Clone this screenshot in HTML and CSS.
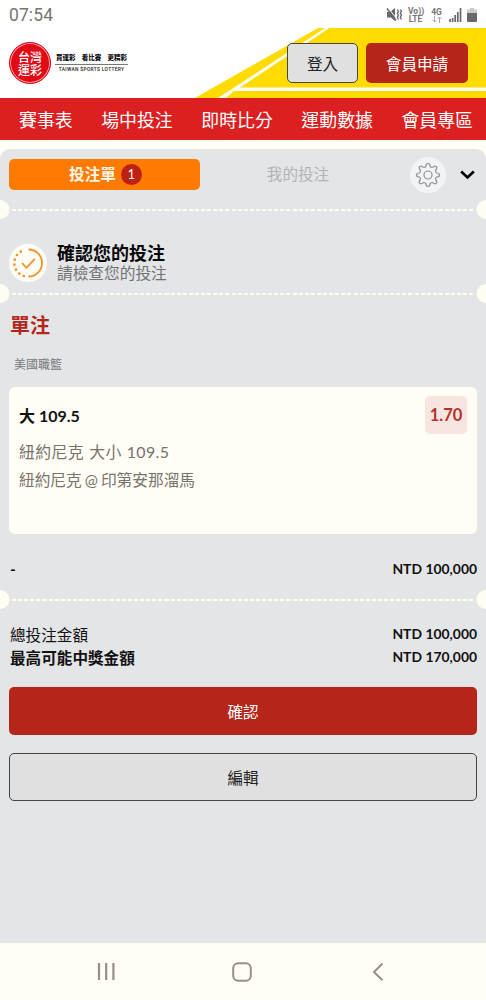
FILE: index.html
```html
<!DOCTYPE html>
<html lang="zh-Hant">
<head>
<meta charset="utf-8">
<meta name="viewport" content="width=device-width, initial-scale=1">
<title>台灣運彩</title>
<link rel="stylesheet" href="styles.css">
</head>
<body>
<div class="screen">
  <div class="status">
    <span class="clock">07:54</span>
    <div class="status-icons">
      <svg width="16" height="16" viewBox="0 0 16 16"><path d="M1 5h3l5-4v13l-4-3.500H1z" fill="#686868"/><path d="M2 .8l9.500 12" stroke="#fff" stroke-width="1"/><path d="M1 1.500l9 12" stroke="#686868" stroke-width="1.600"/><path d="M11.300 2.500l1.200 1.700-1.200 2 1.200 2-1.200 2 1.200 2.300M14.300 2.500l1.200 1.700-1.200 2 1.200 2-1.200 2 1.200 2.300" fill="none" stroke="#686868" stroke-width="1.300"/></svg>
      <span class="net volte">Vo))<br>LTE</span>
      <span class="net lte">4G<br><svg width="10" height="7" viewBox="0 0 10 7"><path d="M2.500 0v6M.5 4l2 2 2-2M7.500 7V1M5.500 3l2-2 2 2" fill="none" stroke="#aaa"/></svg></span>
      <svg class="signal" width="13" height="14" viewBox="0 0 13 14"><path d="M1 14v-3M3.600 14v-4M6.200 14V7M8.800 14V4M11.500 14V0" stroke="#686868" stroke-width="1.700"/></svg>
      <svg class="battery" width="10" height="14" viewBox="0 0 10 14"><path d="M3 0h4v1.500h3V6H0V1.500h3z" fill="#c9c9c9"/><path d="M0 5h10v8q0 1-1 1H1q-1 0-1-1z" fill="#686868"/></svg>
    </div>
  </div>

  <header class="header">
    <svg class="stripes" width="486" height="70" viewBox="0 0 486 70">
      <path d="M195 70L318 0H486V70z" fill="#ffdb00"/>
      <path d="M218 70L325 0h4.500L240 59.500H486V63H234L226 70z" fill="#fffdf2"/>
    </svg>
    <div class="brand">
      <div class="seal"><span>台灣</span><span>運彩</span></div>
      <div class="tagline">
        <div class="slogan"><span>買運彩</span><span>看比賽</span><span>更精彩</span></div>
        <div class="english">TAIWAN SPORTS LOTTERY</div>
      </div>
    </div>
    <div class="account">
      <button class="btn login">登入</button>
      <button class="btn join">會員申請</button>
    </div>
  </header>

  <nav class="menu"><a>賽事表</a><a>場中投注</a><a>即時比分</a><a>運動數據</a><a>會員專區</a></nav>

  <main class="slip">
    <div class="tabs">
      <div class="tab active">投注單<span class="count">1</span></div>
      <div class="tab">我的投注</div>
      <div class="gear"><svg width="26" height="26" viewBox="0 0 26 26" fill="none" stroke="#8f9194" stroke-width="1.200" stroke-linejoin="round"><path d="M11 4.200Q11 1.500 13 1.500T15 4.200Q15.300 5 16.300 5.300T18.200 5.100Q20.100 3.500 21.300 4.700T20.900 7.800Q20.400 8.700 20.700 9.700T21.800 11Q24.500 11 24.500 13T21.800 15Q21 15.300 20.700 16.300T20.900 18.200Q22.500 20.100 21.300 21.300T18.200 20.900Q17.300 20.400 16.300 20.700T15 21.800Q15 24.500 13 24.500T11 21.800Q10.700 21 9.700 20.700T7.800 20.900Q5.900 22.500 4.700 21.300T5.100 18.200Q5.600 17.300 5.300 16.300T4.200 15Q1.500 15 1.500 13T4.200 11Q5 10.700 5.300 9.700T5.100 7.800Q3.500 5.900 4.700 4.700T7.800 5.100Q8.700 5.600 9.700 5.300T11 4.200z"/><circle cx="13" cy="13" r="4"/></svg></div>
      <svg class="chevron" width="15" height="10" viewBox="0 0 15 10"><path d="M1.200 1.500l6.300 6 6.300-6" fill="none" stroke="#050505" stroke-width="2.700"/></svg>
    </div>
    <div class="divider"></div>

    <section class="notice">
      <div class="check"><svg width="32" height="32" viewBox="0 0 32 32" fill="none" stroke="#f39325" stroke-width="1.800"><path d="M16.500 2.500a13.500 13.500 0 0 1 0 27"/><path d="M11.800 29A13.500 13.500 0 0 1 12.500 3" stroke-width="2.700" stroke-linecap="round" stroke-dasharray="0 5.150"/><path d="M10 16l4.500 4.800 8.300-9"/></svg></div>
      <div>
        <h1>確認您的投注</h1>
        <p>請檢查您的投注</p>
      </div>
    </section>
    <div class="divider"></div>

    <section class="bet">
      <h2>單注</h2>
      <div class="league">美國職籃</div>
      <div class="card">
        <div class="pick"><span>大 109.5</span><span class="odds">1.70</span></div>
        <p class="market">紐約尼克 大小 109.5</p>
        <p class="match">紐約尼克 @ 印第安那溜馬</p>
      </div>
      <div class="row stake"><span>-</span><b>NTD 100,000</b></div>
    </section>
    <div class="divider"></div>

    <section class="totals">
      <div class="row"><span>總投注金額</span><b>NTD 100,000</b></div>
      <div class="row strong"><span>最高可能中獎金額</span><b>NTD 170,000</b></div>
      <button class="btn confirm">確認</button>
      <button class="btn edit">編輯</button>
    </section>
  </main>

  <footer class="system">
    <svg width="20" height="20" viewBox="0 0 20 20"><path d="M3 1v17M10.200 1v17M17.400 1v17" stroke="#959189" stroke-width="2.200"/></svg>
    <svg width="20" height="20" viewBox="0 0 20 20"><rect x="1.200" y="1.200" width="17.600" height="17.600" rx="5" fill="none" stroke="#959189" stroke-width="2"/></svg>
    <svg width="20" height="20" viewBox="0 0 20 20"><path d="M14.500 1.500L6 10l8.500 8.200" fill="none" stroke="#959189" stroke-width="2"/></svg>
  </footer>
</div>
</body>
</html>
```
FILE: styles.css
```css
* { box-sizing: border-box; }
body { margin: 0; background: #fffdf5; font-family: Lato, "Noto Sans CJK TC", sans-serif; color: #111; }
h1, h2, p { margin: 0; }
.screen { width: 486px; height: 1000px; display: flex; flex-direction: column; overflow: hidden; }
.status { height: 28px; flex: none; background: #fff; display: flex; justify-content: space-between; align-items: center; padding: 2px 9px 0; }
.clock { font: 17.500px/26px Roboto, sans-serif; color: #757575; letter-spacing: .1px; }
.status-icons { display: flex; align-items: center; }
.net { font: 700 8.500px/8px Roboto, sans-serif; color: #757575; text-align: center; }
.net svg { display: block; margin: 0 auto; }
.volte { margin-left: 6px; width: 15px; white-space: nowrap; }
.lte { margin-left: 8px; width: 11px; }
.signal { margin-left: 7px; }
.battery { margin: 0 0 0 5px; }

.header { height: 70px; flex: none; position: relative; background: #fff; display: flex; justify-content: space-between; padding: 15px 18px 0 9px; }
.stripes { position: absolute; left: 0; top: 0; }
.brand, .account { position: relative; display: flex; }
.brand { height: 41px; margin-top: -1px; align-items: center; }
.seal { width: 42px; height: 42px; border-radius: 50%; border: 1px solid #e30a17; background: #e30a17; box-shadow: inset 0 0 0 1px #f6a3a4; color: #fff; display: flex; flex-direction: column; align-items: center; justify-content: center; font: 500 12px/13px "Noto Sans CJK TC", sans-serif; }
.seal span { display: block; height: 13px; }
.tagline { width: 73px; margin: 1px 0 0 4px; }
.slogan { display: flex; justify-content: space-between; padding: 0 1px 2px; border-bottom: 1px solid #777; font: 900 6.500px/9px "Noto Sans CJK TC", sans-serif; color: #111; }
.english { font: 500 4.900px/8px Roboto, sans-serif; letter-spacing: .3px; text-align: center; white-space: nowrap; color: #222; }
.account { gap: 8px; }
.btn { display: block; padding: 0; border: 0; border-radius: 5px; font: 15.600px/24px "Noto Sans CJK TC", sans-serif; }
.login { width: 71px; height: 40px; border: 1px solid #444; background: #e0e0e0; color: #222; }
.join { width: 102px; height: 40px; background: #b52519; color: #fff; }

.menu { height: 42px; flex: none; background: #dc1f20; color: #fff; display: flex; justify-content: space-between; padding: 0 13px 0 19px; font: 17.900px/42px "Noto Sans CJK TC", sans-serif; white-space: nowrap; }

.slip { flex: 1; min-height: 0; margin-top: 9px; background: #e4e5e7; border-radius: 10px 10px 0 0; display: flex; flex-direction: column; }
.tabs { height: 51px; display: flex; align-items: center; padding: 0 11px 0 9px; }
.tab { width: 196px; height: 31px; text-align: center; font-size: 15.600px; line-height: 31px; color: #b2b3b5; }
.tab.active { width: 191px; border-radius: 5px; background: #ff7a00; color: #fff8ea; font-weight: 700; display: flex; align-items: center; justify-content: center; gap: 5px; padding-left: 2px; }
.count { width: 21px; height: 21px; border-radius: 50%; background: #bd2015; font-size: 13px; line-height: 21px; font-weight: 400; }
.gear { width: 36px; height: 36px; margin-left: 14px; border-radius: 50%; background: #f2f3f4; display: grid; place-items: center; }
.chevron { margin-left: 14px; }

.divider { height: 19px; flex: none; background:
  radial-gradient(circle at 0 50%, #fffdf2 9px, transparent 9.800px),
  radial-gradient(circle at 100% 50%, #fffdf2 9px, transparent 9.800px),
  repeating-linear-gradient(90deg, #fffdf2 0 4px, transparent 4px 6.100px) 12px 9px / 464px 2px no-repeat; }

.notice { height: 65px; display: flex; padding: 25px 9px 0; gap: 10px; }
.check { width: 38px; height: 38px; border-radius: 50%; background: #fffdf5; display: grid; place-items: center; }
.notice h1 { font-size: 18px; line-height: 19px; color: #080808; }
.notice p { font-size: 15.700px; line-height: 21px; color: #707173; }

.bet { height: 287px; padding: 8px 9px 0 10px; }
.bet h2 { font-size: 20px; line-height: 28px; color: #b52519; }
.league { margin: 16px 0 12px 4px; font-size: 12px; line-height: 20px; color: #77787a; }
.card { height: 147px; margin-left: -1px; background: #fffdf5; border-radius: 6px; padding: 9px 10px 0; }
.pick { height: 38px; display: flex; justify-content: space-between; align-items: center; font-size: 16px; font-weight: 700; color: #111; }
.odds { width: 42px; height: 38px; border-radius: 5px; background: #f6e6df; color: #b23329; font-size: 16.500px; line-height: 38px; text-align: center; }
.card p { font-size: 15.700px; line-height: 28px; color: #77736e; white-space: nowrap; }
.card .market { margin-top: 4px; font-size: 15.900px; letter-spacing: .4px; word-spacing: .5px; }
.card .match { word-spacing: -1px; }
.row { display: flex; justify-content: space-between; align-items: center; height: 23px; font-size: 15.600px; }
.row b { font-size: 13.900px; font-weight: 700; }
.stake { margin-top: 23px; font-weight: 700; }

.totals { padding: 13px 9px 0 10px; }
.strong { font-weight: 700; }
.confirm, .edit { width: 468px; height: 48px; margin-left: -1px; }
.confirm { margin-top: 19px; background: #b52519; color: #fff; }
.edit { margin-top: 18px; background: #e0e0e0; border: 1px solid #444; color: #222; }

.system { height: 57px; flex: none; background: #fffdf5; display: flex; justify-content: space-between; align-items: center; padding: 0 98px 0 96px; }
```
